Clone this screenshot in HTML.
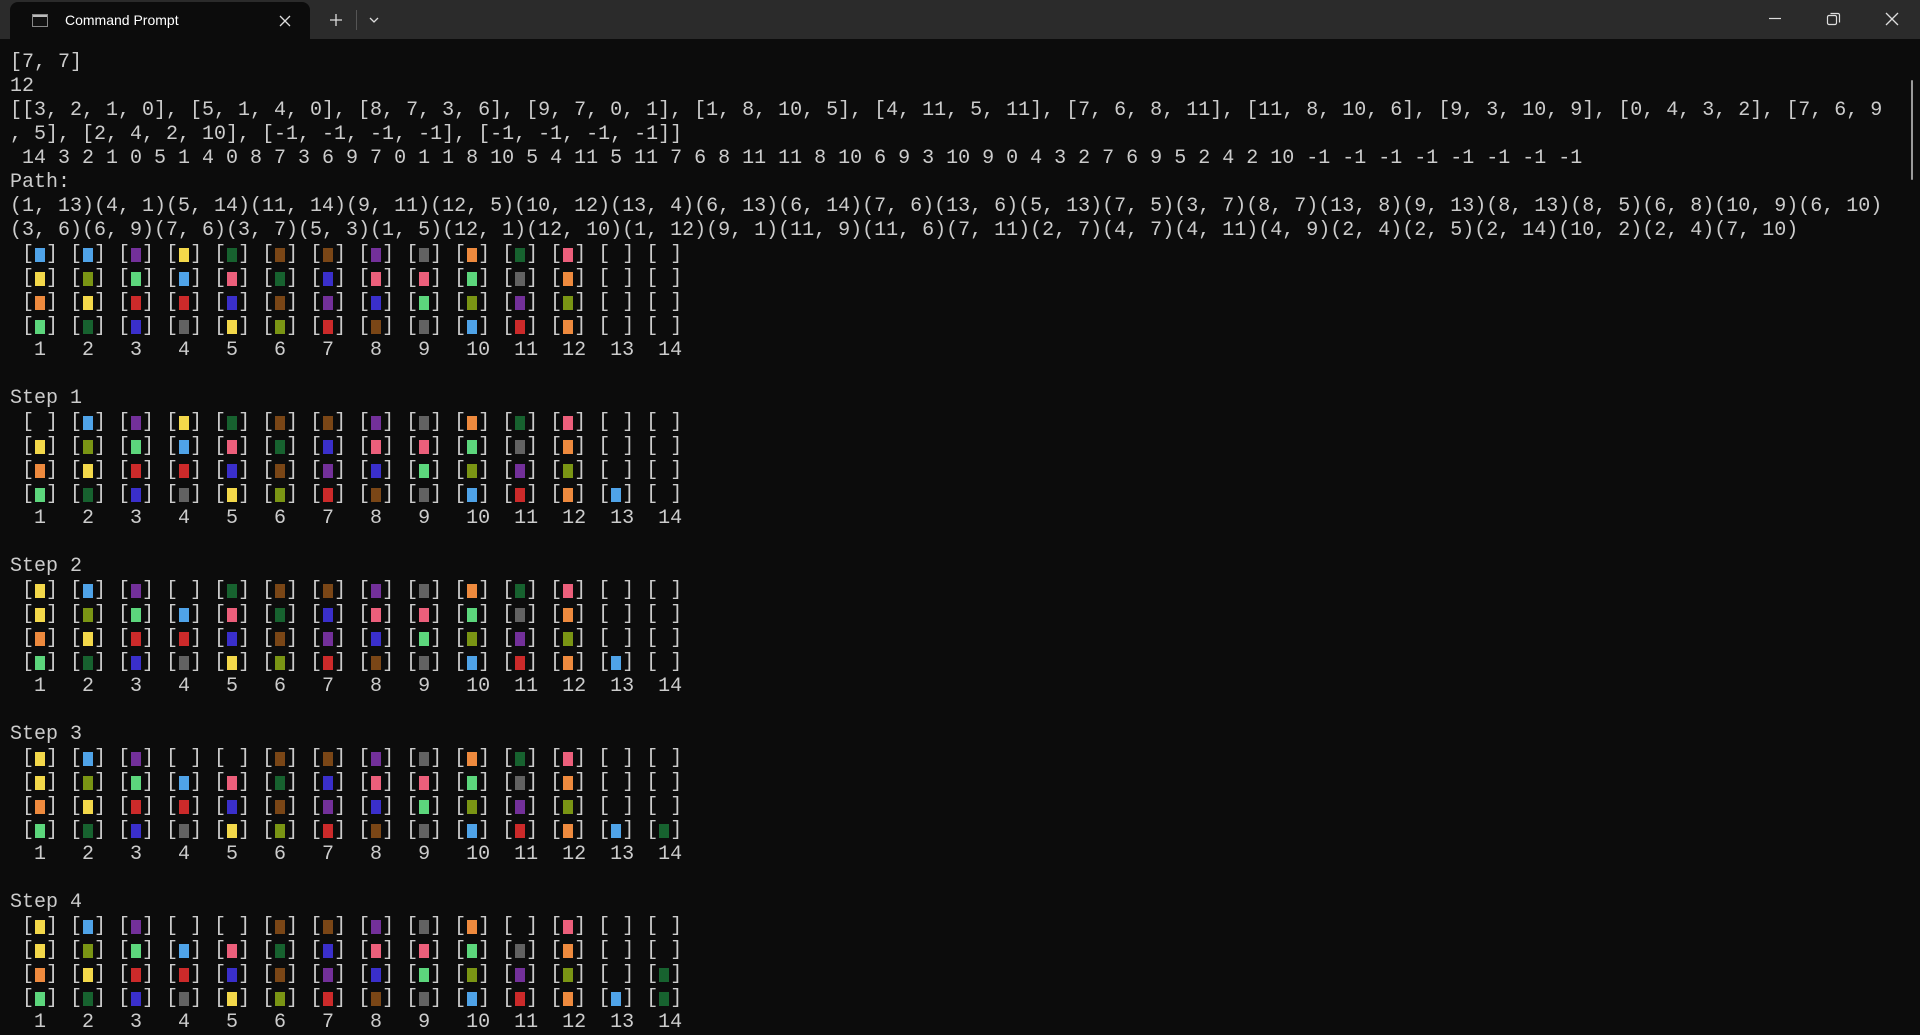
<!DOCTYPE html>
<html><head><meta charset="utf-8"><style>
html,body{margin:0;padding:0;background:#0c0c0c;width:1920px;height:1020px;overflow:hidden}
.bar{position:absolute;left:0;top:0;width:1920px;height:39px;background:#2b2b2b}
.tab{position:absolute;left:10px;top:2px;width:300px;height:37px;background:#0c0c0c;border-radius:8px 8px 0 0}
.tt{position:absolute;left:55px;top:10px;font:14px "Liberation Sans",sans-serif;color:#fff}
.ico{position:absolute;left:22px;top:12px;width:16px;height:13px;background:#111;border:1px solid #888;box-sizing:border-box}
.ico:before{content:"";position:absolute;left:0;top:0;width:14px;height:2px;background:#bbb}
svg{position:absolute}
pre{position:absolute;left:10px;top:51px;margin:0;font:20px/24px "Liberation Mono",monospace;color:#cccccc;white-space:pre}
i{display:inline-block;width:12px;height:24px;vertical-align:top;position:relative}
i:after{content:"";position:absolute;left:1px;top:5px;width:10px;height:14px;background:var(--c)}
.b{--c:#4fa3e8}.p{--c:#73309a}.y{--c:#f3d84a}.g{--c:#17622f}.r{--c:#7a4616}.k{--c:#626262}.o{--c:#ee8a3e}.n{--c:#ec5f7b}.l{--c:#7a9514}.e{--c:#5cd67c}.x{--c:#3a2fcb}.d{--c:#cc2a2a}
.sb{position:absolute;left:1911px;top:80px;width:2px;height:100px;background:#9a9a9a;border-radius:1px}
</style></head><body>
<div class="bar"></div>
<div class="tab"><div class="ico"></div><div class="tt">Command Prompt</div>
<svg style="left:268px;top:12px" width="14" height="14"><path d="M2 2L12 12M12 2L2 12" stroke="#ddd" stroke-width="1.3"/></svg></div>
<svg style="left:329px;top:13px" width="14" height="14"><path d="M7 1V13M1 7H13" stroke="#ddd" stroke-width="1.3"/></svg>
<div style="position:absolute;left:356px;top:10px;width:1px;height:20px;background:#555"></div>
<svg style="left:368px;top:15px" width="12" height="10"><path d="M2 3L6 7L10 3" stroke="#ddd" stroke-width="1.3" fill="none"/></svg>
<svg style="left:1768px;top:12px" width="14" height="14"><path d="M1 6.5H13" stroke="#ddd" stroke-width="1.2"/></svg>
<svg style="left:1826px;top:11px" width="16" height="16"><rect x="1.5" y="4.5" width="9" height="9" rx="1.5" stroke="#ddd" fill="none" stroke-width="1.2"/><path d="M4.5 2.5H12A1.5 1.5 0 0 1 13.5 4V11.5" stroke="#ddd" fill="none" stroke-width="1.2"/></svg>
<svg style="left:1884px;top:11px" width="16" height="16"><path d="M2 2L14 14M14 2L2 14" stroke="#ddd" stroke-width="1.3"/></svg>
<div class="sb"></div>
<pre>[7, 7]
12
[[3, 2, 1, 0], [5, 1, 4, 0], [8, 7, 3, 6], [9, 7, 0, 1], [1, 8, 10, 5], [4, 11, 5, 11], [7, 6, 8, 11], [11, 8, 10, 6], [9, 3, 10, 9], [0, 4, 3, 2], [7, 6, 9
, 5], [2, 4, 2, 10], [-1, -1, -1, -1], [-1, -1, -1, -1]]
 14 3 2 1 0 5 1 4 0 8 7 3 6 9 7 0 1 1 8 10 5 4 11 5 11 7 6 8 11 11 8 10 6 9 3 10 9 0 4 3 2 7 6 9 5 2 4 2 10 -1 -1 -1 -1 -1 -1 -1 -1
Path:
(1, 13)(4, 1)(5, 14)(11, 14)(9, 11)(12, 5)(10, 12)(13, 4)(6, 13)(6, 14)(7, 6)(13, 6)(5, 13)(7, 5)(3, 7)(8, 7)(13, 8)(9, 13)(8, 13)(8, 5)(6, 8)(10, 9)(6, 10)
(3, 6)(6, 9)(7, 6)(3, 7)(5, 3)(1, 5)(12, 1)(12, 10)(1, 12)(9, 1)(11, 9)(11, 6)(7, 11)(2, 7)(4, 7)(4, 11)(4, 9)(2, 4)(2, 5)(2, 14)(10, 2)(2, 4)(7, 10)
 [<i class=b></i>] [<i class=b></i>] [<i class=p></i>] [<i class=y></i>] [<i class=g></i>] [<i class=r></i>] [<i class=r></i>] [<i class=p></i>] [<i class=k></i>] [<i class=o></i>] [<i class=g></i>] [<i class=n></i>] [ ] [ ]
 [<i class=y></i>] [<i class=l></i>] [<i class=e></i>] [<i class=b></i>] [<i class=n></i>] [<i class=g></i>] [<i class=x></i>] [<i class=n></i>] [<i class=n></i>] [<i class=e></i>] [<i class=k></i>] [<i class=o></i>] [ ] [ ]
 [<i class=o></i>] [<i class=y></i>] [<i class=d></i>] [<i class=d></i>] [<i class=x></i>] [<i class=r></i>] [<i class=p></i>] [<i class=x></i>] [<i class=e></i>] [<i class=l></i>] [<i class=p></i>] [<i class=l></i>] [ ] [ ]
 [<i class=e></i>] [<i class=g></i>] [<i class=x></i>] [<i class=k></i>] [<i class=y></i>] [<i class=l></i>] [<i class=d></i>] [<i class=r></i>] [<i class=k></i>] [<i class=b></i>] [<i class=d></i>] [<i class=o></i>] [ ] [ ]
  1   2   3   4   5   6   7   8   9   10  11  12  13  14

Step 1
 [ ] [<i class=b></i>] [<i class=p></i>] [<i class=y></i>] [<i class=g></i>] [<i class=r></i>] [<i class=r></i>] [<i class=p></i>] [<i class=k></i>] [<i class=o></i>] [<i class=g></i>] [<i class=n></i>] [ ] [ ]
 [<i class=y></i>] [<i class=l></i>] [<i class=e></i>] [<i class=b></i>] [<i class=n></i>] [<i class=g></i>] [<i class=x></i>] [<i class=n></i>] [<i class=n></i>] [<i class=e></i>] [<i class=k></i>] [<i class=o></i>] [ ] [ ]
 [<i class=o></i>] [<i class=y></i>] [<i class=d></i>] [<i class=d></i>] [<i class=x></i>] [<i class=r></i>] [<i class=p></i>] [<i class=x></i>] [<i class=e></i>] [<i class=l></i>] [<i class=p></i>] [<i class=l></i>] [ ] [ ]
 [<i class=e></i>] [<i class=g></i>] [<i class=x></i>] [<i class=k></i>] [<i class=y></i>] [<i class=l></i>] [<i class=d></i>] [<i class=r></i>] [<i class=k></i>] [<i class=b></i>] [<i class=d></i>] [<i class=o></i>] [<i class=b></i>] [ ]
  1   2   3   4   5   6   7   8   9   10  11  12  13  14

Step 2
 [<i class=y></i>] [<i class=b></i>] [<i class=p></i>] [ ] [<i class=g></i>] [<i class=r></i>] [<i class=r></i>] [<i class=p></i>] [<i class=k></i>] [<i class=o></i>] [<i class=g></i>] [<i class=n></i>] [ ] [ ]
 [<i class=y></i>] [<i class=l></i>] [<i class=e></i>] [<i class=b></i>] [<i class=n></i>] [<i class=g></i>] [<i class=x></i>] [<i class=n></i>] [<i class=n></i>] [<i class=e></i>] [<i class=k></i>] [<i class=o></i>] [ ] [ ]
 [<i class=o></i>] [<i class=y></i>] [<i class=d></i>] [<i class=d></i>] [<i class=x></i>] [<i class=r></i>] [<i class=p></i>] [<i class=x></i>] [<i class=e></i>] [<i class=l></i>] [<i class=p></i>] [<i class=l></i>] [ ] [ ]
 [<i class=e></i>] [<i class=g></i>] [<i class=x></i>] [<i class=k></i>] [<i class=y></i>] [<i class=l></i>] [<i class=d></i>] [<i class=r></i>] [<i class=k></i>] [<i class=b></i>] [<i class=d></i>] [<i class=o></i>] [<i class=b></i>] [ ]
  1   2   3   4   5   6   7   8   9   10  11  12  13  14

Step 3
 [<i class=y></i>] [<i class=b></i>] [<i class=p></i>] [ ] [ ] [<i class=r></i>] [<i class=r></i>] [<i class=p></i>] [<i class=k></i>] [<i class=o></i>] [<i class=g></i>] [<i class=n></i>] [ ] [ ]
 [<i class=y></i>] [<i class=l></i>] [<i class=e></i>] [<i class=b></i>] [<i class=n></i>] [<i class=g></i>] [<i class=x></i>] [<i class=n></i>] [<i class=n></i>] [<i class=e></i>] [<i class=k></i>] [<i class=o></i>] [ ] [ ]
 [<i class=o></i>] [<i class=y></i>] [<i class=d></i>] [<i class=d></i>] [<i class=x></i>] [<i class=r></i>] [<i class=p></i>] [<i class=x></i>] [<i class=e></i>] [<i class=l></i>] [<i class=p></i>] [<i class=l></i>] [ ] [ ]
 [<i class=e></i>] [<i class=g></i>] [<i class=x></i>] [<i class=k></i>] [<i class=y></i>] [<i class=l></i>] [<i class=d></i>] [<i class=r></i>] [<i class=k></i>] [<i class=b></i>] [<i class=d></i>] [<i class=o></i>] [<i class=b></i>] [<i class=g></i>]
  1   2   3   4   5   6   7   8   9   10  11  12  13  14

Step 4
 [<i class=y></i>] [<i class=b></i>] [<i class=p></i>] [ ] [ ] [<i class=r></i>] [<i class=r></i>] [<i class=p></i>] [<i class=k></i>] [<i class=o></i>] [ ] [<i class=n></i>] [ ] [ ]
 [<i class=y></i>] [<i class=l></i>] [<i class=e></i>] [<i class=b></i>] [<i class=n></i>] [<i class=g></i>] [<i class=x></i>] [<i class=n></i>] [<i class=n></i>] [<i class=e></i>] [<i class=k></i>] [<i class=o></i>] [ ] [ ]
 [<i class=o></i>] [<i class=y></i>] [<i class=d></i>] [<i class=d></i>] [<i class=x></i>] [<i class=r></i>] [<i class=p></i>] [<i class=x></i>] [<i class=e></i>] [<i class=l></i>] [<i class=p></i>] [<i class=l></i>] [ ] [<i class=g></i>]
 [<i class=e></i>] [<i class=g></i>] [<i class=x></i>] [<i class=k></i>] [<i class=y></i>] [<i class=l></i>] [<i class=d></i>] [<i class=r></i>] [<i class=k></i>] [<i class=b></i>] [<i class=d></i>] [<i class=o></i>] [<i class=b></i>] [<i class=g></i>]
  1   2   3   4   5   6   7   8   9   10  11  12  13  14
</pre>
</body></html>
